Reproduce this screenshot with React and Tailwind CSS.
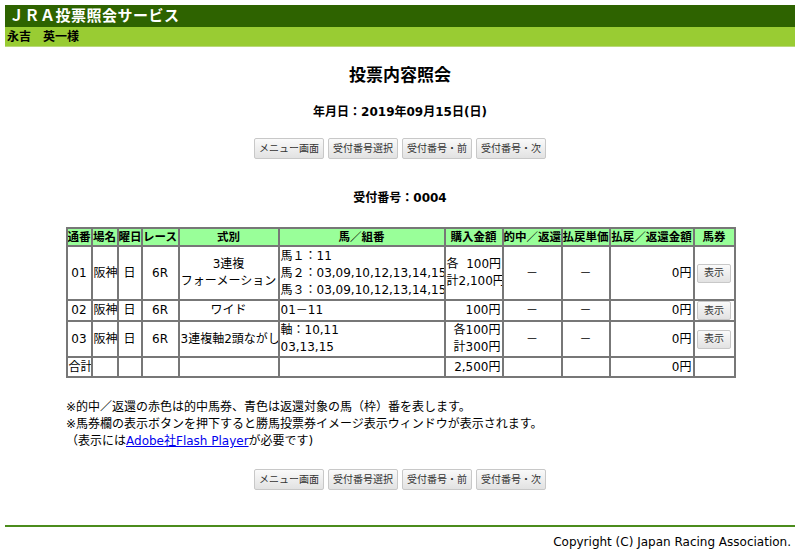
import React from "react";

const F = { fontFamily: '"DejaVu Sans", "Noto Sans CJK JP", sans-serif' };

function Btn({ children }) {
  return (
    <button className="h-[21px] px-[4px] text-[10px] text-[#333] border border-[#c8c8c8] rounded-[2px] bg-gradient-to-b from-[#fafafa] to-[#e2e2e2] leading-none whitespace-nowrap">
      {children}
    </button>
  );
}

function Buttons() {
  return (
    <div className="flex justify-center gap-[4px]">
      <Btn>メニュー画面</Btn>
      <Btn>受付番号選択</Btn>
      <Btn>受付番号・前</Btn>
      <Btn>受付番号・次</Btn>
    </div>
  );
}

function Show() {
  return (
    <button className="h-[19px] px-[6px] text-[10px] text-[#333] border border-[#c8c8c8] rounded-[2px] bg-gradient-to-b from-[#fafafa] to-[#e2e2e2] leading-none">
      表示
    </button>
  );
}

const th = "border-2 border-[#777] bg-[#99ff99] font-bold text-center text-[11.5px] px-0 h-[18px] leading-[14px] whitespace-nowrap overflow-hidden";
const td = "border-2 border-[#777] px-[1px] leading-[17px] whitespace-nowrap overflow-hidden";

export default function App() {
  return (
    <div className="w-[800px] h-[556px] bg-white text-[12px] text-black overflow-hidden" style={F}>
      <div className="pt-[5px] px-[5px]">
        <div className="bg-[#2e6300] h-[22px] flex items-center pl-[4px] text-white font-bold text-[15px] tracking-[0.5px]">
          ＪＲＡ投票照会サービス
        </div>
        <div className="bg-[#99cc33] h-[20px] flex items-center pl-[2px] font-bold text-[12px] border-b border-[#b9d97a]">
          永吉　英一様
        </div>
      </div>

      <div className="text-center font-bold text-[17px] mt-[16px] leading-[24px]">投票内容照会</div>
      <div className="text-center font-bold text-[12px] mt-[17px] leading-[16px]">年月日：2019年09月15日(日)</div>
      <div className="mt-[18px]">
        <Buttons />
      </div>
      <div className="text-center font-bold text-[12px] mt-[31px] leading-[16px]">受付番号：0004</div>

      <div className="mt-[21px] flex justify-center pl-[1px]">
        <table className="border-collapse table-fixed w-[668px]">
          <colgroup>
            <col className="w-[25px]" />
            <col className="w-[26px]" />
            <col className="w-[24px]" />
            <col className="w-[37px]" />
            <col className="w-[100px]" />
            <col className="w-[166px]" />
            <col className="w-[58px]" />
            <col className="w-[59px]" />
            <col className="w-[48px]" />
            <col className="w-[84px]" />
            <col className="w-[41px]" />
          </colgroup>
          <thead>
            <tr>
              <th className={th}>通番</th>
              <th className={th}>場名</th>
              <th className={th}>曜日</th>
              <th className={th}>レース</th>
              <th className={th}>式別</th>
              <th className={th}>馬／組番</th>
              <th className={th}>購入金額</th>
              <th className={th}>的中／返還</th>
              <th className={th}>払戻単価</th>
              <th className={th}>払戻／返還金額</th>
              <th className={th}>馬券</th>
            </tr>
          </thead>
          <tbody>
            <tr className="h-[54px]">
              <td className={td + " text-center"}>01</td>
              <td className={td}>阪神</td>
              <td className={td + " text-center"}>日</td>
              <td className={td + " text-center"}>6R</td>
              <td className={td + " text-center"}>3連複<br />フォーメーション</td>
              <td className={td}>馬１：11<br />馬２：03,09,10,12,13,14,15<br />馬３：03,09,10,12,13,14,15</td>
              <td className={td + " text-right"}>各&nbsp;&nbsp;100円<br />計2,100円</td>
              <td className={td + " text-center"}>－</td>
              <td className={td + " text-center"}>－</td>
              <td className={td + " text-right"}>0円</td>
              <td className={td + " text-center"}><Show /></td>
            </tr>
            <tr className="h-[21px]">
              <td className={td + " text-center"}>02</td>
              <td className={td}>阪神</td>
              <td className={td + " text-center"}>日</td>
              <td className={td + " text-center"}>6R</td>
              <td className={td + " text-center"}>ワイド</td>
              <td className={td}>01－11</td>
              <td className={td + " text-right"}>100円</td>
              <td className={td + " text-center"}>－</td>
              <td className={td + " text-center"}>－</td>
              <td className={td + " text-right"}>0円</td>
              <td className={td + " text-center"}><Show /></td>
            </tr>
            <tr className="h-[36px]">
              <td className={td + " text-center"}>03</td>
              <td className={td}>阪神</td>
              <td className={td + " text-center"}>日</td>
              <td className={td + " text-center"}>6R</td>
              <td className={td + " text-center"}>3連複軸2頭ながし</td>
              <td className={td}>軸：10,11<br />03,13,15</td>
              <td className={td + " text-right"}>各100円<br />計300円</td>
              <td className={td + " text-center"}>－</td>
              <td className={td + " text-center"}>－</td>
              <td className={td + " text-right"}>0円</td>
              <td className={td + " text-center"}><Show /></td>
            </tr>
            <tr className="h-[20px]">
              <td className={td}>合計</td>
              <td className={td}></td>
              <td className={td}></td>
              <td className={td}></td>
              <td className={td}></td>
              <td className={td}></td>
              <td className={td + " text-right"}>2,500円</td>
              <td className={td}></td>
              <td className={td}></td>
              <td className={td + " text-right"}>0円</td>
              <td className={td}></td>
            </tr>
          </tbody>
        </table>
      </div>

      <div className="pl-[66px] mt-[21px] text-[12px] leading-[17px]">
        <div>※的中／返還の赤色は的中馬券、青色は返還対象の馬（枠）番を表します。</div>
        <div>※馬券欄の表示ボタンを押下すると勝馬投票券イメージ表示ウィンドウが表示されます。</div>
        <div>（表示には<a className="text-[#0000ee] underline" href="#">Adobe社Flash Player</a>が必要です)</div>
      </div>

      <div className="mt-[19px]">
        <Buttons />
      </div>

      <div className="mx-[5px] mt-[35px] h-[2px] bg-[#4b8c1c]"></div>
      <div className="text-right pr-[9px] mt-[7px] text-[12px] leading-[16px]">Copyright (C) Japan Racing Association.</div>
    </div>
  );
}
